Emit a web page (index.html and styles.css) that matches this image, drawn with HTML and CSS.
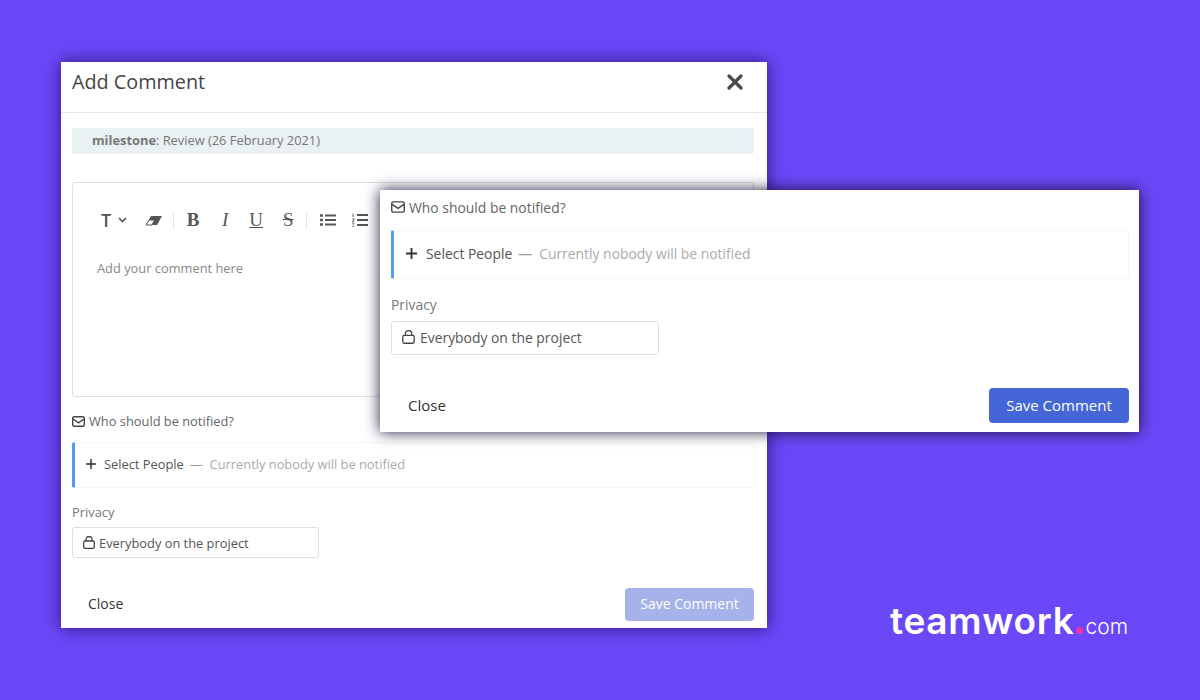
FILE: index.html
```html
<!DOCTYPE html>
<html lang="en">
<head>
    <meta charset="UTF-8">
    <meta name="viewport" content="width=device-width, initial-scale=1.0">
    <title>Add Comment</title>
    <link rel="stylesheet" href="styles.css">
</head>
<body>
    <div class="stage">
        <div class="dialog dialog-main">
            <div class="dialog-header">
                <h2>Add Comment</h2>
                <svg class="close-x" width="16" height="16" viewBox="0 0 16 16"><path d="M2 2 L14 14 M14 2 L2 14" stroke="#454a50" stroke-width="3.2" stroke-linecap="round"/></svg>
            </div>
            <div class="milestone"><strong>milestone</strong>: Review (26 February 2021)</div>
            <div class="editor">
                <div class="toolbar">
                    <span class="tool tool-t">T</span>
                    <svg class="tool-caret" width="9" height="6" viewBox="0 0 9 6"><path d="M1 1 L4.500 4.500 L8 1" fill="none" stroke="#555" stroke-width="1.600"/></svg>
                    <svg class="tool-eraser" width="18" height="11" viewBox="0 0 18 11"><path d="M6 1 H17 L12 10 H1 Z" fill="#555"/><path d="M1 10 L4 5 H9.500 L7 10 Z" fill="#fff" stroke="#555"/></svg>
                    <span class="tool-sep"></span>
                    <span class="tool tool-b">B</span>
                    <span class="tool tool-i">I</span>
                    <span class="tool tool-u">U</span>
                    <span class="tool tool-s">S</span>
                    <span class="tool-sep"></span>
                    <svg class="tool-list" width="16" height="12" viewBox="0 0 16 12"><path d="M0 1.500 H3 M0 6 H3 M0 10.500 H3" stroke="#555" stroke-width="2.400"/><path d="M5 1.500 H16 M5 6 H16 M5 10.500 H16" stroke="#555" stroke-width="1.800"/></svg>
                    <svg class="tool-olist" width="16" height="14" viewBox="0 0 16 14"><path d="M1 0.500 V4 M0.200 6 H2.400 L0.400 9 H2.400 M0.200 10.800 H2.400 M0.200 13.200 H2.400" fill="none" stroke="#555" stroke-width="0.900"/><path d="M5 2 H16 M5 7 H16 M5 12 H16" stroke="#555" stroke-width="1.800"/></svg>
                </div>
                <div class="placeholder">Add your comment here</div>
            </div>
            <div class="notify-label">
                <svg width="13" height="11" viewBox="0 0 13 11"><rect x="0.700" y="0.700" width="11.600" height="9.600" rx="1.500" fill="none" stroke="#444" stroke-width="1.400"/><path d="M1 3 L6.500 6.800 L12 3" fill="none" stroke="#444" stroke-width="1.400"/></svg>
                Who should be notified?
            </div>
            <div class="people">
                <svg width="10" height="10" viewBox="0 0 10 10"><path d="M5 0 V10 M0 5 H10" stroke="#333" stroke-width="1.500"/></svg>
                <span class="people-link">Select People</span>
                <span class="people-dash">—</span>
                <span class="people-note">Currently nobody will be notified</span>
            </div>
            <div class="privacy-label">Privacy</div>
            <div class="privacy-select">
                <svg width="12" height="13" viewBox="0 0 12 13"><rect x="0.700" y="5" width="10.600" height="7.300" rx="1.300" fill="none" stroke="#444" stroke-width="1.300"/><path d="M3 5 V3.500 a3 3 0 0 1 6 0 V5" fill="none" stroke="#444" stroke-width="1.300"/></svg>
                Everybody on the project
            </div>
            <div class="dialog-footer">
                <span class="close-link">Close</span>
                <button class="save save-off">Save Comment</button>
            </div>
        </div>

        <div class="dialog dialog-zoom">
            <div class="notify-label">
                <svg width="14" height="12" viewBox="0 0 13 11"><rect x="0.700" y="0.700" width="11.600" height="9.600" rx="1.500" fill="none" stroke="#444" stroke-width="1.300"/><path d="M1 3 L6.500 6.800 L12 3" fill="none" stroke="#444" stroke-width="1.300"/></svg>
                Who should be notified?
            </div>
            <div class="people">
                <svg width="11" height="11" viewBox="0 0 10 10"><path d="M5 0 V10 M0 5 H10" stroke="#333" stroke-width="1.700"/></svg>
                <span class="people-link">Select People</span>
                <span class="people-dash">—</span>
                <span class="people-note">Currently nobody will be notified</span>
            </div>
            <div class="privacy-label">Privacy</div>
            <div class="privacy-select">
                <svg width="13" height="14" viewBox="0 0 12 13"><rect x="0.700" y="5" width="10.600" height="7.300" rx="1.300" fill="none" stroke="#444" stroke-width="1.200"/><path d="M3 5 V3.500 a3 3 0 0 1 6 0 V5" fill="none" stroke="#444" stroke-width="1.200"/></svg>
                Everybody on the project
            </div>
            <div class="dialog-footer">
                <span class="close-link">Close</span>
                <button class="save">Save Comment</button>
            </div>
        </div>

        <div class="logo">teamwork<span class="logo-dot"></span><span class="logo-com">com</span></div>
    </div>
</body>
</html>
```

FILE: styles.css
```css
body {
    margin: 0;
    font-family: "Open Sans", sans-serif;
    color: #555;
}
.stage {
    position: relative;
    width: 1200px;
    height: 700px;
    overflow: hidden;
    background: #6a48f7;
}
.dialog {
    position: absolute;
    box-sizing: border-box;
    background: #fff;
}
.dialog-main {
    left: 61px;
    top: 62px;
    width: 706px;
    height: 566px;
    padding: 0 13px 0 11px;
    font-size: 12.85px;
    box-shadow: 0 0 16px rgba(35, 15, 110, 0.9);
}
.dialog-zoom {
    left: 380px;
    top: 190px;
    width: 759px;
    height: 242px;
    padding: 0 10px 0 11px;
    font-size: 13.9px;
    box-shadow: 0 0 14px rgba(20, 15, 50, 0.95);
}
.dialog-header {
    display: flex;
    justify-content: space-between;
    align-items: center;
    box-sizing: border-box;
    height: 51px;
    margin: 0 -13px 15px -11px;
    padding: 0 24px 11px 11px;
    border-bottom: 1px solid #e4e8f0;
}
.dialog-header h2 {
    margin: 0 0 1px;
    font-size: 19.8px;
    font-weight: 400;
    color: #444;
}
.milestone {
    height: 26px;
    line-height: 24px;
    padding-left: 20px;
    margin-bottom: 28px;
    border-radius: 3px;
    background: #e9f1f3;
    color: #777;
}
.milestone strong {
    font-weight: 700;
}
.editor {
    box-sizing: border-box;
    height: 215px;
    padding: 25px 24px;
    margin-bottom: 15px;
    border: 1px solid #dcdfe3;
    border-radius: 3px;
}
.toolbar {
    display: flex;
    align-items: center;
    height: 24px;
    color: #555;
}
.tool {
    line-height: 24px;
}
.tool-t {
    margin-left: 4px;
    font-size: 18px;
    font-weight: 600;
}
.tool-caret {
    margin-left: 7px;
}
.tool-eraser {
    margin-left: 18px;
}
.tool-sep {
    width: 1px;
    height: 17px;
    margin: 0 3px 0 10px;
    background: #e2e5e8;
}
.tool-b,
.tool-i,
.tool-u,
.tool-s {
    width: 32px;
    font-family: "Liberation Serif", serif;
    font-size: 19px;
    text-align: center;
}
.tool-b {
    font-weight: 700;
}
.tool-i {
    font-style: italic;
    margin-right: -1px;
}
.tool-u {
    text-decoration: underline;
}
.tool-s {
    text-decoration: line-through;
}
.tool-s + .tool-sep {
    margin: 0 13px 0 2px;
}
.tool-olist {
    margin-left: 16px;
}
.placeholder {
    margin-top: 27px;
    color: #888;
}
.notify-label {
    display: flex;
    align-items: center;
    gap: 4px;
    height: 18px;
    color: #666;
}
.people {
    display: flex;
    align-items: center;
    box-sizing: border-box;
    height: 46px;
    margin-top: 12px;
    padding: 0 0 2px 11px;
    border: 1px dotted #eceef0;
    border-left: 3px solid #4f9cf0;
    border-radius: 2px;
}
.people svg {
    margin-right: 8px;
}
.people-link {
    color: #555;
}
.people-dash {
    margin: 0 7px 0 6px;
    color: #999;
}
.people-note {
    color: #aaa;
}
.privacy-label {
    margin-top: 15px;
    color: #777;
}
.privacy-select {
    display: flex;
    align-items: center;
    gap: 4px;
    box-sizing: border-box;
    width: 247px;
    height: 31px;
    margin-top: 6px;
    padding-left: 10px;
    border: 1px solid #dcdfe3;
    border-radius: 3px;
    color: #555;
}
.dialog-footer {
    display: flex;
    justify-content: space-between;
    align-items: center;
    margin-top: 30px;
    padding-left: 16px;
}
.close-link {
    margin-bottom: 2px;
    font-size: 14px;
    color: #333;
}
.save {
    width: 129px;
    height: 33px;
    padding: 0 0 2px;
    border: none;
    border-radius: 4px;
    background: #4466d6;
    color: #fff;
    font-family: "Open Sans", sans-serif;
    font-size: 14px;
}
.save-off {
    background: #a5b3ea;
}
.dialog-zoom .notify-label {
    box-sizing: border-box;
    height: 34px;
}
.dialog-zoom .people {
    height: 49px;
    margin-top: 6px;
    padding-left: 12px;
}
.dialog-zoom .people svg {
    margin-right: 9px;
}
.dialog-zoom .privacy-label {
    margin-top: 16px;
}
.dialog-zoom .privacy-select {
    gap: 5px;
    width: 268px;
    height: 34px;
    margin-top: 7px;
    padding-bottom: 2px;
}
.dialog-zoom .dialog-footer {
    margin-top: 33px;
    padding-left: 17px;
}
.dialog-zoom .close-link {
    margin-bottom: 2px;
    font-size: 15px;
}
.dialog-zoom .save {
    width: 140px;
    height: 35px;
    font-size: 15px;
}
.logo {
    position: absolute;
    left: 890px;
    top: 599px;
    display: flex;
    align-items: baseline;
    font-family: Inter, sans-serif;
    font-size: 37px;
    font-weight: 600;
    line-height: 44px;
    letter-spacing: 0.7px;
    color: #fff;
}
.logo-dot {
    width: 7px;
    height: 7px;
    margin: 0 2px 0 2px;
    border-radius: 50%;
    background: #f52ea5;
}
.logo-com {
    font-size: 21px;
    font-weight: 300;
    letter-spacing: 0;
}
```
